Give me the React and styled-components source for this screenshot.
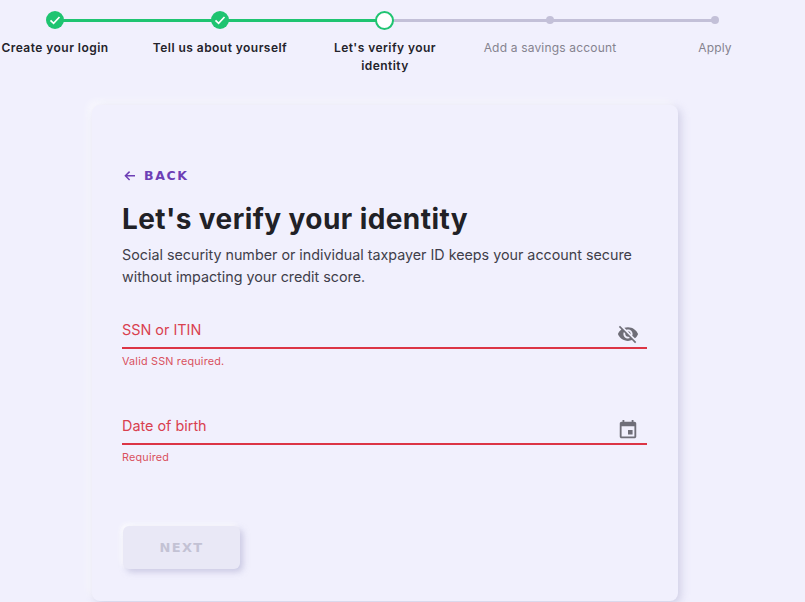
import React from "react";
import styled, { createGlobalStyle } from "styled-components";

const Global = createGlobalStyle`
  html, body { margin: 0; padding: 0; height: 100%; overflow: hidden; background: #f1f0fd; }
  body { font-family: Inter, "Liberation Sans", sans-serif; }
`;

const Page = styled.div`
  width: 805px;
  height: 602px;
  overflow: hidden;
  background: #f1f0fd;
  display: flex;
  flex-direction: column;
`;

const Stepper = styled.ol`
  list-style: none;
  margin: 11px 0 0 -27.5px;
  padding: 0;
  display: flex;
  width: 825px;
  height: 94px;
  flex: none;
`;

const Step = styled.li`
  position: relative;
  width: 165px;
  flex: none;
  display: flex;
  flex-direction: column;
  align-items: center;
`;

const Connector = styled.span`
  position: absolute;
  top: 7.5px;
  left: 50%;
  width: 165px;
  height: 3px;
  background: ${(p) => (p.$done ? "#1fc471" : "#c3c0d8")};
`;

const Marker = styled.span`
  position: relative;
  z-index: 1;
  height: 18px;
  display: flex;
  align-items: center;
  justify-content: center;
`;

const Done = styled.span`
  width: 18px;
  height: 18px;
  margin-left: -1px;
  border-radius: 50%;
  background: #1fc471;
  display: flex;
  align-items: center;
  justify-content: center;
`;

const Current = styled.span`
  width: 19px;
  height: 19px;
  margin-left: -1px;
  box-sizing: border-box;
  border-radius: 50%;
  background: #fff;
  border: 2px solid #1fc471;
`;

const Dot = styled.span`
  width: 8px;
  height: 8px;
  border-radius: 50%;
  background: #c3c0d8;
`;

const StepLabel = styled.span`
  margin-top: 10px;
  width: 125px;
  text-align: center;
  font-size: 12px;
  line-height: 18px;
  letter-spacing: ${(p) => (p.$muted ? "0.18px" : "0.45px")};
  font-weight: ${(p) => (p.$muted ? 400 : 600)};
  color: ${(p) => (p.$muted ? "#85838f" : "#24232b")};
  white-space: ${(p) => (p.$wrap ? "normal" : "nowrap")};
  display: flex;
  justify-content: center;
`;

const Card = styled.main`
  box-sizing: border-box;
  flex: none;
  margin-left: 92px;
  width: 586px;
  height: 496px;
  padding: 61px 31px 0 30px;
  border-radius: 8px;
  background: #f1f0fd;
  box-shadow: 3px 3px 8px rgba(170, 168, 205, 0.45), -4px -4px 7px rgba(255, 255, 255, 0.6);
  display: flex;
  flex-direction: column;
`;

const Back = styled.a`
  display: flex;
  align-items: center;
  gap: 8px;
  height: 18px;
  padding-left: 1px;
  color: #6d3fb5;
  font-family: "DejaVu Sans", Inter, sans-serif;
  font-size: 12.5px;
  font-weight: 700;
  letter-spacing: 1.6px;
`;

const Title = styled.h1`
  margin: 17px 0 0;
  font-size: 28px;
  line-height: 36px;
  font-weight: 700;
  color: #212126;
  letter-spacing: 0.42px;
`;

const Lead = styled.p`
  margin: 7px 0 0;
  font-size: 14.3px;
  line-height: 22px;
  color: #3f3e4a;
`;

const Field = styled.div`
  margin-top: ${(p) => p.$gap}px;
`;

const InputRow = styled.div`
  height: 35px;
  box-sizing: border-box;
  display: flex;
  align-items: center;
  justify-content: space-between;
  border-bottom: 2px solid #dc3545;
  padding-right: 8px;
`;

const Placeholder = styled.span`
  font-size: 14.4px;
  color: #d9404f;
  margin-top: -2px;
`;

const FieldIcon = styled.svg`
  width: 22px;
  height: 22px;
  margin-top: 7px;
  fill: #6f6e78;
`;

const Hint = styled.div`
  margin-top: 6px;
  font-size: 10.8px;
  line-height: 14px;
  letter-spacing: 0.2px;
  color: #d9505e;
`;

const NextButton = styled.button`
  margin: 61px 0 0 1px;
  width: 117px;
  height: 43px;
  border: none;
  border-radius: 6px;
  background: #e9e8f6;
  color: #c3c2d4;
  font-family: "DejaVu Sans", Inter, sans-serif;
  font-size: 13px;
  font-weight: 700;
  letter-spacing: 1.3px;
  box-shadow: 3px 3px 6px rgba(170, 168, 205, 0.55), -2px -2px 5px rgba(255, 255, 255, 0.9);
`;

const Check = () => (
  <svg width="12" height="12" viewBox="0 0 12 12" fill="none" stroke="#fff" strokeWidth="1.7">
    <path d="M1.5 6.3 4.6 9.3 10.5 3" />
  </svg>
);

const ArrowLeft = () => (
  <svg width="13" height="13" viewBox="0 0 13 13" fill="none" stroke="#6d3fb5" strokeWidth="1.5">
    <path d="M12 6.8H2.5M6.6 2.6 2.4 6.8l4.2 4.2" />
  </svg>
);

const EyeOff = () => (
  <FieldIcon viewBox="0 0 24 24">
    <path d="M12 7c2.76 0 5 2.24 5 5 0 .65-.13 1.26-.36 1.83l2.92 2.92c1.51-1.26 2.7-2.89 3.43-4.75-1.73-4.39-6-7.5-11-7.5-1.4 0-2.74.25-3.98.7l2.16 2.16C10.74 7.13 11.35 7 12 7zM2 4.27l2.28 2.28.46.46C3.08 8.3 1.78 10.02 1 12c1.73 4.39 6 7.5 11 7.5 1.55 0 3.03-.3 4.38-.84l.42.42L19.73 22 21 20.73 3.27 3 2 4.27zM7.53 9.8l1.55 1.55c-.05.21-.08.43-.08.65 0 1.66 1.34 3 3 3 .22 0 .44-.03.65-.08l1.55 1.55c-.67.33-1.41.53-2.2.53-2.76 0-5-2.24-5-5 0-.79.2-1.53.53-2.2zm4.31-.78l3.15 3.15.02-.16c0-1.66-1.34-3-3-3l-.17.01z" />
  </FieldIcon>
);

const CalendarIcon = () => (
  <FieldIcon viewBox="0 0 24 24">
    <path d="M17 12h-5v5h5v-5zM16 1v2H8V1H6v2H5c-1.11 0-1.99.9-1.99 2L3 19c0 1.1.89 2 2 2h14c1.1 0 2-.9 2-2V5c0-1.1-.9-2-2-2h-1V1h-2zm3 18H5V8h14v11z" />
  </FieldIcon>
);

const steps = [
  { label: "Create your login", state: "done" },
  { label: "Tell us about yourself", state: "done" },
  { label: "Let's verify your identity", state: "current" },
  { label: "Add a savings account", state: "todo" },
  { label: "Apply", state: "todo" },
];

export default function App() {
  return (
    <Page>
      <Global />
      <Stepper>
        {steps.map((s, i) => (
          <Step key={s.label}>
            {i < steps.length - 1 && <Connector $done={s.state === "done"} />}
            <Marker>
              {s.state === "done" && (
                <Done>
                  <Check />
                </Done>
              )}
              {s.state === "current" && <Current />}
              {s.state === "todo" && <Dot />}
            </Marker>
            <StepLabel $muted={s.state === "todo"} $wrap={s.state === "current"}>
              {s.label}
            </StepLabel>
          </Step>
        ))}
      </Stepper>
      <Card>
        <Back>
          <ArrowLeft />
          BACK
        </Back>
        <Title>Let's verify your identity</Title>
        <Lead>
          Social security number or individual taxpayer ID keeps your account secure without
          impacting your credit score.
        </Lead>
        <Field $gap={26}>
          <InputRow>
            <Placeholder>SSN or ITIN</Placeholder>
            <EyeOff />
          </InputRow>
          <Hint>Valid SSN required.</Hint>
        </Field>
        <Field $gap={41}>
          <InputRow>
            <Placeholder>Date of birth</Placeholder>
            <CalendarIcon />
          </InputRow>
          <Hint>Required</Hint>
        </Field>
        <NextButton disabled>NEXT</NextButton>
      </Card>
    </Page>
  );
}
